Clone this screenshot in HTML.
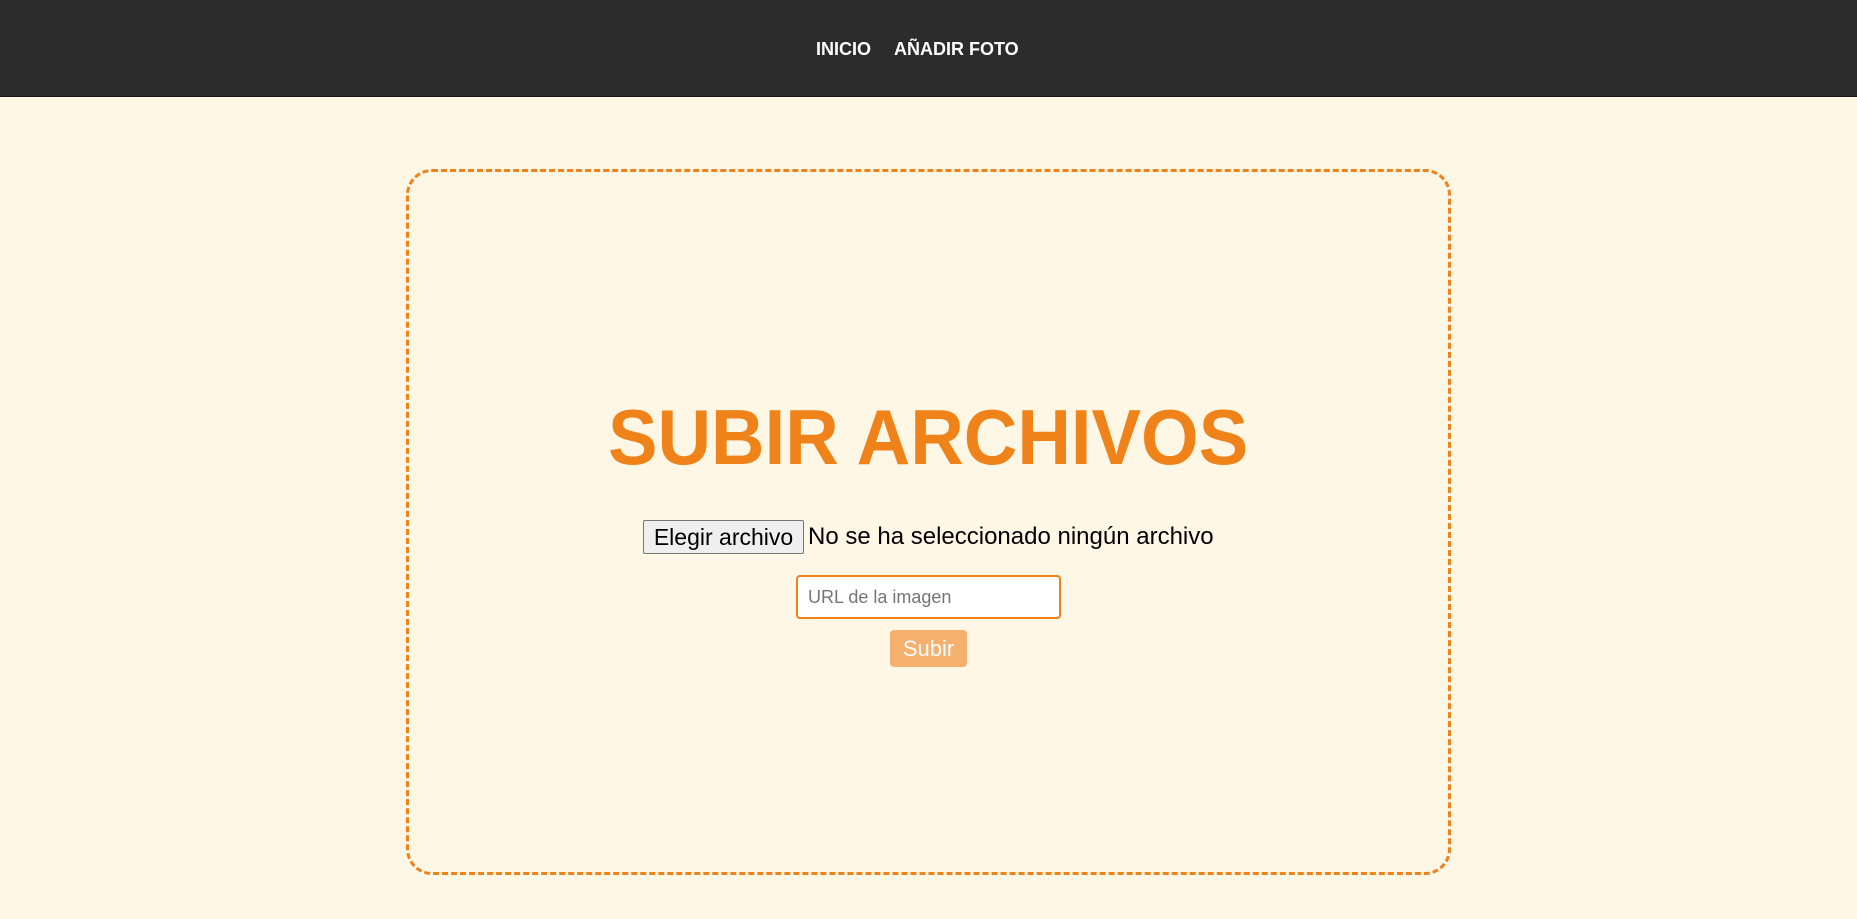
<!DOCTYPE html>
<html><head><meta charset="utf-8"><style>
*{margin:0;padding:0;box-sizing:border-box}
html,body{width:1857px;height:919px;overflow:hidden;background:#fff7e6;font-family:"Liberation Sans",sans-serif}
.hdr{position:absolute;left:0;top:0;width:1857px;height:97px;background:#2c2c2c;border-bottom:1px solid #1a1a1a}
.nav{position:absolute;top:39px;color:#fff;font-weight:bold;font-size:18px;white-space:nowrap}
.box{position:absolute;left:406px;top:169px;width:1045px;height:706px;border:3px dashed #f0821a;border-radius:26px}
.title{position:absolute;left:608px;top:392px;font-size:78px;font-weight:bold;color:#f0821a;white-space:nowrap;transform:scaleX(0.951);transform-origin:left top;line-height:90px}
.btn{position:absolute;left:643px;top:520px;width:161px;height:34px;border:1px solid #767676;background:#efefef;border-radius:2px;font-size:23px;line-height:32px;text-align:center;color:#000;white-space:nowrap}
.ftxt{position:absolute;left:808px;top:520px;font-size:24px;line-height:34px;color:#000;white-space:nowrap}
.url{position:absolute;left:796px;top:575px;width:265px;height:44px;border:2px solid #f0821a;border-radius:4px;background:#fff;font-size:18px;line-height:40px;padding-left:10px;color:#757575}
.sub{position:absolute;left:890px;top:630px;width:77px;height:37px;background:#f5b06e;border-radius:4px;color:#fff;font-size:22px;line-height:37px;text-align:center}
</style></head><body>
<div class="hdr"></div>
<div class="nav" style="left:816px">INICIO</div>
<div class="nav" style="left:894px">AÑADIR FOTO</div>
<div class="box"></div>
<div class="title">SUBIR ARCHIVOS</div>
<div class="btn">Elegir archivo</div>
<div class="ftxt">No se ha seleccionado ningún archivo</div>
<div class="url">URL de la imagen</div>
<div class="sub">Subir</div>
</body></html>
